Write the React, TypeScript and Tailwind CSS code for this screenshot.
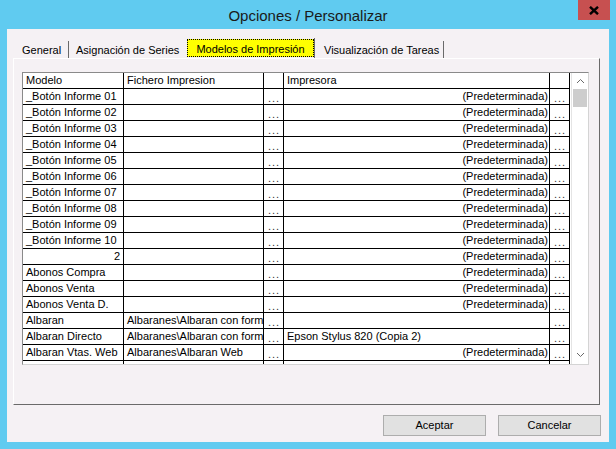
import React from "react";

type Row = {
  modelo: string;
  modeloRight?: boolean;
  fichero: string;
  impresora: string;
  impresoraLeft?: boolean;
};

const rows: Row[] = [
  ...Array.from({ length: 10 }, (_, i) => ({
    modelo: `_Botón Informe ${String(i + 1).padStart(2, "0")}`,
    fichero: "",
    impresora: "(Predeterminada)",
  })),
  { modelo: "2", modeloRight: true, fichero: "", impresora: "(Predeterminada)" },
  { modelo: "Abonos Compra", fichero: "", impresora: "(Predeterminada)" },
  { modelo: "Abonos Venta", fichero: "", impresora: "(Predeterminada)" },
  { modelo: "Abonos Venta D.", fichero: "", impresora: "(Predeterminada)" },
  { modelo: "Albaran", fichero: "Albaranes\\Albaran con form", impresora: "" },
  {
    modelo: "Albaran Directo",
    fichero: "Albaranes\\Albaran con form",
    impresora: "Epson Stylus 820 (Copia 2)",
    impresoraLeft: true,
  },
  { modelo: "Albaran Vtas. Web", fichero: "Albaranes\\Albaran Web", impresora: "(Predeterminada)" },
];

function Dots() {
  return (
    <div className="w-[20px] shrink-0 border-r border-black flex justify-center pt-[2px] text-[#333] tracking-[1px] pl-[1px]">
      ...
    </div>
  );
}

function GridRow({ row, tall = true }: { row?: Row; tall?: boolean }) {
  return (
    <div
      className={`flex shrink-0 leading-[15px] ${tall ? "h-[16px] border-b border-black" : "h-[3px]"}`}
    >
      <div
        className={`w-[101px] shrink-0 border-r border-black overflow-hidden whitespace-nowrap px-[3px] ${row?.modeloRight ? "text-right pr-[3px]" : ""}`}
      >
        {row?.modelo}
      </div>
      <div className="w-[140px] shrink-0 border-r border-black overflow-hidden whitespace-nowrap pl-[3px]">
        {row?.fichero}
      </div>
      {tall ? <Dots /> : <div className="w-[20px] shrink-0 border-r border-black" />}
      <div
        className={`w-[266px] shrink-0 border-r border-black overflow-hidden whitespace-nowrap pl-[3px] pr-[1px] ${row?.impresoraLeft ? "" : "text-right"}`}
      >
        {row?.impresora}
      </div>
      {tall ? <Dots /> : <div className="w-[20px] shrink-0 border-r border-black" />}
    </div>
  );
}

function Chevron({ up }: { up?: boolean }) {
  return (
    <svg width="9" height="6" viewBox="0 0 9 6" className="block">
      <polyline
        points={up ? "1,5 4.5,1.5 8,5" : "1,1 4.5,4.5 8,1"}
        fill="none"
        stroke="#6a6a6a"
        strokeWidth="1"
      />
    </svg>
  );
}

export default function App() {
  return (
    <div className="w-[616px] h-[449px] bg-[#60cbf0] flex flex-col overflow-hidden font-['Liberation_Sans',Arial,sans-serif] text-[11px] text-black">
      {/* title bar */}
      <div className="h-[29px] shrink-0 grid grid-cols-[1fr_auto_1fr] items-start">
        <div />
        <div className="pt-[6px] text-[15px] leading-[20px] text-[#1a1a1a]">
          Opciones / Personalizar
        </div>
        <div className="flex justify-end pr-[6px]">
          <div className="w-[32px] h-[20px] bg-[#c75050] flex items-center justify-center">
            <svg width="10" height="9" viewBox="0 0 10 9">
              <path d="M1 0.8 L9 8.2 M9 0.8 L1 8.2" stroke="#000" strokeWidth="2.4" />
            </svg>
          </div>
        </div>
      </div>

      {/* client area */}
      <div className="flex-1 mx-[7px] mb-[7px] bg-[#f5f1f4] flex flex-col">
        {/* tabs */}
        <div className="mt-[9px] ml-[6px] h-[20px] flex items-end shrink-0">
          <div className="w-[56px] h-[17px] border-r border-[#6a6a6a] pl-[9px] pt-[1px] leading-[17px]">
            General
          </div>
          <div className="w-[116px] h-[17px] pl-[7px] pt-[1px] leading-[17px]">Asignación de Series</div>
          <div className="w-[130px] h-[20px] border-r border-[#6a6a6a] pl-[2px] pt-[1px]">
            <div className="h-[18px] bg-[#ffff00] border border-dotted border-black flex items-center justify-center leading-[16px] pt-[1px]">
              Modelos de Impresión
            </div>
          </div>
          <div className="w-[129px] h-[17px] border-r border-[#6a6a6a] pl-[9px] pt-[1px] leading-[17px]">
            Visualización de Tareas
          </div>
        </div>

        {/* tab panel */}
        <div className="ml-[6px] w-[587px] h-[347px] shrink-0 border-t border-l border-white border-r border-b border-r-[#6a6a6a] border-b-[#6a6a6a] pt-[13px] pl-[8px]">
          <div className="w-[567px] h-[293px] flex border border-t-[#8a8a8a] border-l-[#8a8a8a] border-r-[#d4d4d4] border-b-[#d4d4d4] bg-white overflow-hidden">
            <div className="flex flex-col w-[547px] shrink-0">
              <div className="flex shrink-0 h-[16px] border-b border-black leading-[15px]">
                <div className="w-[101px] shrink-0 border-r border-black pl-[3px]">Modelo</div>
                <div className="w-[140px] shrink-0 border-r border-black pl-[3px]">Fichero Impresion</div>
                <div className="w-[20px] shrink-0 border-r border-black" />
                <div className="w-[266px] shrink-0 border-r border-black pl-[3px]">Impresora</div>
                <div className="w-[20px] shrink-0 border-r border-black" />
              </div>
              {rows.map((r) => (
                <GridRow key={r.modelo} row={r} />
              ))}
              <GridRow tall={false} />
            </div>
            {/* scrollbar */}
            <div className="flex-1 flex flex-col bg-white border-l border-[#e4e4e4] ml-[1px]">
              <div className="h-[16px] flex items-center justify-center">
                <Chevron up />
              </div>
              <div className="h-[18px] mx-[1px] bg-[#cdcdcd]" />
              <div className="flex-1" />
              <div className="h-[17px] flex items-center justify-center mb-[1px]">
                <Chevron />
              </div>
            </div>
          </div>
        </div>

        {/* buttons */}
        <div className="mt-[10px] flex justify-end gap-[12px] pr-[8px]">
          <button className="w-[103px] h-[21px] bg-[#e1e1e1] border border-[#adadad] text-[11px] leading-[19px]">
            Aceptar
          </button>
          <button className="w-[103px] h-[21px] bg-[#e1e1e1] border border-[#adadad] text-[11px] leading-[19px]">
            Cancelar
          </button>
        </div>
      </div>
    </div>
  );
}
